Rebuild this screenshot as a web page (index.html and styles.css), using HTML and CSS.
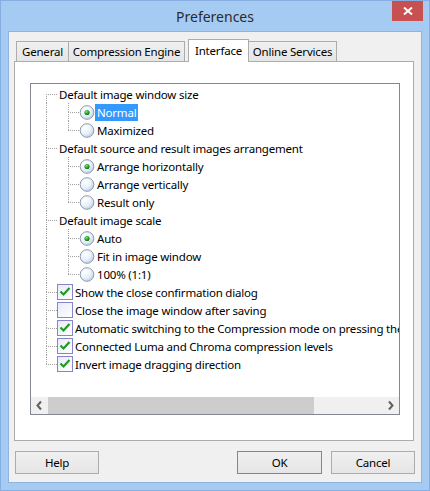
FILE: index.html
```html
<!DOCTYPE html>
<html>
<head>
<meta charset="utf-8">
<link rel="stylesheet" href="styles.css">
</head>
<body>
<div class="window">
  <div class="titlebar">
    <span class="title">Preferences</span>
    <div class="close"><svg width="10" height="8" viewBox="0 0 10 8"><path d="M1 0.5 L9 7.5 M9 0.5 L1 7.5" stroke="#fff" stroke-width="2" fill="none"/></svg></div>
  </div>
  <div class="client">
    <div class="tabs">
      <div class="tab t-general">General</div>
      <div class="tab t-ce">Compression Engine</div>
      <div class="tab active t-if">Interface</div>
      <div class="tab t-os">Online Services</div>
    </div>
    <div class="panel">
      <div class="treebox">
        <div class="tree">
          <div class="row"><span class="g g-root first"><i></i><i></i></span><span class="lbl">Default image window size</span></div>
          <div class="row"><span class="g g-root pipe"><i></i><i></i></span><span class="g g-child tee"><i></i><i></i></span><svg class="st" width="16" height="16" viewBox="0 0 16 16"><use href="#radio-on"/></svg><span class="lbl sel">Normal</span></div>
          <div class="row"><span class="g g-root pipe"><i></i><i></i></span><span class="g g-child last"><i></i><i></i></span><svg class="st" width="16" height="16" viewBox="0 0 16 16"><use href="#radio-off"/></svg><span class="lbl">Maximized</span></div>
          <div class="row"><span class="g g-root tee"><i></i><i></i></span><span class="lbl">Default source and result images arrangement</span></div>
          <div class="row"><span class="g g-root pipe"><i></i><i></i></span><span class="g g-child tee"><i></i><i></i></span><svg class="st" width="16" height="16" viewBox="0 0 16 16"><use href="#radio-on"/></svg><span class="lbl">Arrange horizontally</span></div>
          <div class="row"><span class="g g-root pipe"><i></i><i></i></span><span class="g g-child tee"><i></i><i></i></span><svg class="st" width="16" height="16" viewBox="0 0 16 16"><use href="#radio-off"/></svg><span class="lbl">Arrange vertically</span></div>
          <div class="row"><span class="g g-root pipe"><i></i><i></i></span><span class="g g-child last"><i></i><i></i></span><svg class="st" width="16" height="16" viewBox="0 0 16 16"><use href="#radio-off"/></svg><span class="lbl">Result only</span></div>
          <div class="row"><span class="g g-root tee"><i></i><i></i></span><span class="lbl">Default image scale</span></div>
          <div class="row"><span class="g g-root pipe"><i></i><i></i></span><span class="g g-child tee"><i></i><i></i></span><svg class="st" width="16" height="16" viewBox="0 0 16 16"><use href="#radio-on"/></svg><span class="lbl">Auto</span></div>
          <div class="row"><span class="g g-root pipe"><i></i><i></i></span><span class="g g-child tee"><i></i><i></i></span><svg class="st" width="16" height="16" viewBox="0 0 16 16"><use href="#radio-off"/></svg><span class="lbl">Fit in image window</span></div>
          <div class="row"><span class="g g-root pipe"><i></i><i></i></span><span class="g g-child last"><i></i><i></i></span><svg class="st" width="16" height="16" viewBox="0 0 16 16"><use href="#radio-off"/></svg><span class="lbl">100% (1:1)</span></div>
          <div class="row"><span class="g g-root tee"><i></i><i></i></span><svg class="st" width="16" height="16" viewBox="0 0 16 16"><use href="#check-on"/></svg><span class="lbl">Show the close confirmation dialog</span></div>
          <div class="row"><span class="g g-root tee"><i></i><i></i></span><svg class="st" width="16" height="16" viewBox="0 0 16 16"><use href="#check-off"/></svg><span class="lbl">Close the image window after saving</span></div>
          <div class="row"><span class="g g-root tee"><i></i><i></i></span><svg class="st" width="16" height="16" viewBox="0 0 16 16"><use href="#check-on"/></svg><span class="lbl">Automatic switching to the Compression mode on pressing the</span></div>
          <div class="row"><span class="g g-root tee"><i></i><i></i></span><svg class="st" width="16" height="16" viewBox="0 0 16 16"><use href="#check-on"/></svg><span class="lbl">Connected Luma and Chroma compression levels</span></div>
          <div class="row"><span class="g g-root last"><i></i><i></i></span><svg class="st" width="16" height="16" viewBox="0 0 16 16"><use href="#check-on"/></svg><span class="lbl">Invert image dragging direction</span></div>
        </div>
        <div class="hscroll">
          <div class="sbtn"><svg width="17" height="17" viewBox="0 0 17 17"><path d="M10 4.5 L6.5 8.5 L10 12.5" stroke="#606060" stroke-width="2" fill="none"/></svg></div>
          <div class="thumb"></div>
          <div class="track"></div>
          <div class="sbtn"><svg width="17" height="17" viewBox="0 0 17 17"><path d="M7 4.5 L10.5 8.5 L7 12.5" stroke="#606060" stroke-width="2" fill="none"/></svg></div>
        </div>
      </div>
    </div>
    <div class="buttons">
      <div class="btn b-help">Help</div>
      <div class="btn b-ok">OK</div>
      <div class="btn b-cancel">Cancel</div>
    </div>
  </div>
</div>
<svg class="defs" width="0" height="0">
  <defs>
    <radialGradient id="rg" cx="0.35" cy="0.3" r="0.8">
      <stop offset="0" stop-color="#ffffff"/>
      <stop offset="0.5" stop-color="#eef3fb"/>
      <stop offset="1" stop-color="#b9cdea"/>
    </radialGradient>
    <radialGradient id="dot" cx="0.4" cy="0.35" r="0.7">
      <stop offset="0" stop-color="#7fe07f"/>
      <stop offset="0.6" stop-color="#22a022"/>
      <stop offset="1" stop-color="#0e6a0e"/>
    </radialGradient>
    <linearGradient id="cg" x1="0" y1="0" x2="1" y2="1">
      <stop offset="0" stop-color="#e6ebf7"/>
      <stop offset="1" stop-color="#ffffff"/>
    </linearGradient>
    <g id="radio-off">
      <circle cx="8" cy="8.5" r="6.8" fill="url(#rg)" stroke="#8c9aae" stroke-width="1"/>
    </g>
    <g id="radio-on">
      <circle cx="8" cy="8.5" r="6.8" fill="url(#rg)" stroke="#8c9aae" stroke-width="1"/>
      <circle cx="8" cy="8.5" r="2.6" fill="url(#dot)"/>
    </g>
    <g id="check-off">
      <rect x="0.5" y="0.5" width="15" height="15" fill="url(#cg)" stroke="#8585c8" stroke-width="1"/>
    </g>
    <g id="check-on">
      <rect x="0.5" y="0.5" width="15" height="15" fill="url(#cg)" stroke="#8585c8" stroke-width="1"/>
      <path d="M3.5 7.5 L6.5 10.5 L12.5 4" stroke="#1f9a1f" stroke-width="2.2" fill="none"/>
    </g>
  </defs>
</svg>
</body>
</html>
```
FILE: styles.css
```css
body {
  margin: 0;
  background: #ffffff;
}

.defs {
  display: block;
  width: 0;
  height: 0;
}

.window {
  width: 430px;
  height: 491px;
  box-sizing: border-box;
  border: 1px solid #86aee0;
  background: #a6cbf3;
  position: relative;
  font-family: "Noto Sans", "Open Sans", sans-serif;
  color: #000;
  overflow: hidden;
}

.titlebar {
  height: 30px;
  display: flex;
  align-items: center;
  justify-content: center;
}

.title {
  font-size: 14px;
  color: #2b2b2b;
  margin-top: 1px;
}

.close {
  position: absolute;
  top: 0;
  right: 6px;
  width: 31px;
  height: 20px;
  background: #c75050;
  display: flex;
  align-items: center;
  justify-content: center;
}

.client {
  margin: 0 7px;
  height: 452px;
  box-sizing: border-box;
  border: 1px solid #8fb4e0;
  background: #f0f0f0;
  padding: 7px 7px 0 5px;
  display: flex;
  flex-direction: column;
}

.tabs {
  height: 22px;
  display: flex;
  align-items: flex-end;
  flex: none;
}

.tab {
  box-sizing: border-box;
  height: 20px;
  border: 1px solid #acacac;
  border-bottom: none;
  background: linear-gradient(#f0f0f0, #e5e5e5);
  font-size: 11.5px;
  letter-spacing: -0.2px;
  display: flex;
  align-items: center;
  justify-content: center;
  white-space: nowrap;
}

.t-general { margin-left: 2px; width: 53px; }
.t-ce { margin-left: -1px; width: 117px; }
.t-if { margin-left: 3px; width: 61px; }
.t-os { margin-left: -1px; width: 89px; }

.tab.active {
  height: 23px;
  margin-bottom: -1px;
  background: #ffffff;
  padding-bottom: 2px;
  position: relative;
  z-index: 1;
}

.panel {
  width: 400px;
  height: 380px;
  box-sizing: border-box;
  border: 1px solid #acacac;
  background: #ffffff;
  padding: 21px 0 0 15px;
  flex: none;
}

.treebox {
  width: 370px;
  height: 332px;
  box-sizing: border-box;
  border: 1px solid #828790;
  display: flex;
  flex-direction: column;
}

.tree {
  flex: 1;
  overflow: hidden;
  padding-top: 1px;
  white-space: nowrap;
  font-size: 11.5px;
  letter-spacing: -0.2px;
}

.row {
  height: 18px;
  display: flex;
  align-items: stretch;
}

.g {
  flex: none;
  display: flex;
  flex-direction: column;
}

.g i {
  display: block;
  flex: 1;
  box-sizing: border-box;
}

.g-root { width: 26px; }
.g-root i { margin-left: 15px; }
.g-child { width: 22px; }
.g-child i { margin-left: 11px; }

.first i:last-child { border-left: 1px dotted #a0a0a0; border-top: 1px dotted #a0a0a0; }
.tee i:first-child { border-left: 1px dotted #a0a0a0; }
.tee i:last-child { border-left: 1px dotted #a0a0a0; border-top: 1px dotted #a0a0a0; }
.last i:first-child { border-left: 1px dotted #a0a0a0; }
.last i:last-child { border-top: 1px dotted #a0a0a0; }
.pipe i { border-left: 1px dotted #a0a0a0; }

.st {
  flex: none;
  align-self: center;
}

.lbl {
  align-self: center;
  padding: 0 2px;
  line-height: 17px;
  height: 17px;
}

.lbl.sel {
  background: #3399ff;
  color: #ffffff;
}

.hscroll {
  height: 17px;
  flex: none;
  display: flex;
  background: #f0f0f0;
}

.sbtn {
  width: 17px;
  height: 17px;
  flex: none;
}

.thumb {
  width: 266px;
  background: #cdcdcd;
  flex: none;
}

.track {
  flex: 1;
}

.buttons {
  margin-top: 10px;
  display: flex;
  margin-right: -1px;
}

.btn {
  height: 23px;
  box-sizing: border-box;
  border: 1px solid #acacac;
  background: linear-gradient(#f0f0f0, #e5e5e5);
  font-size: 11.5px;
  letter-spacing: -0.2px;
  display: flex;
  align-items: center;
  justify-content: center;
}

.b-help { margin-left: 1px; width: 84px; }
.b-ok { margin-left: auto; width: 85px; border-color: #3399ff; }
.b-cancel { margin-left: 9px; width: 84px; }
```
